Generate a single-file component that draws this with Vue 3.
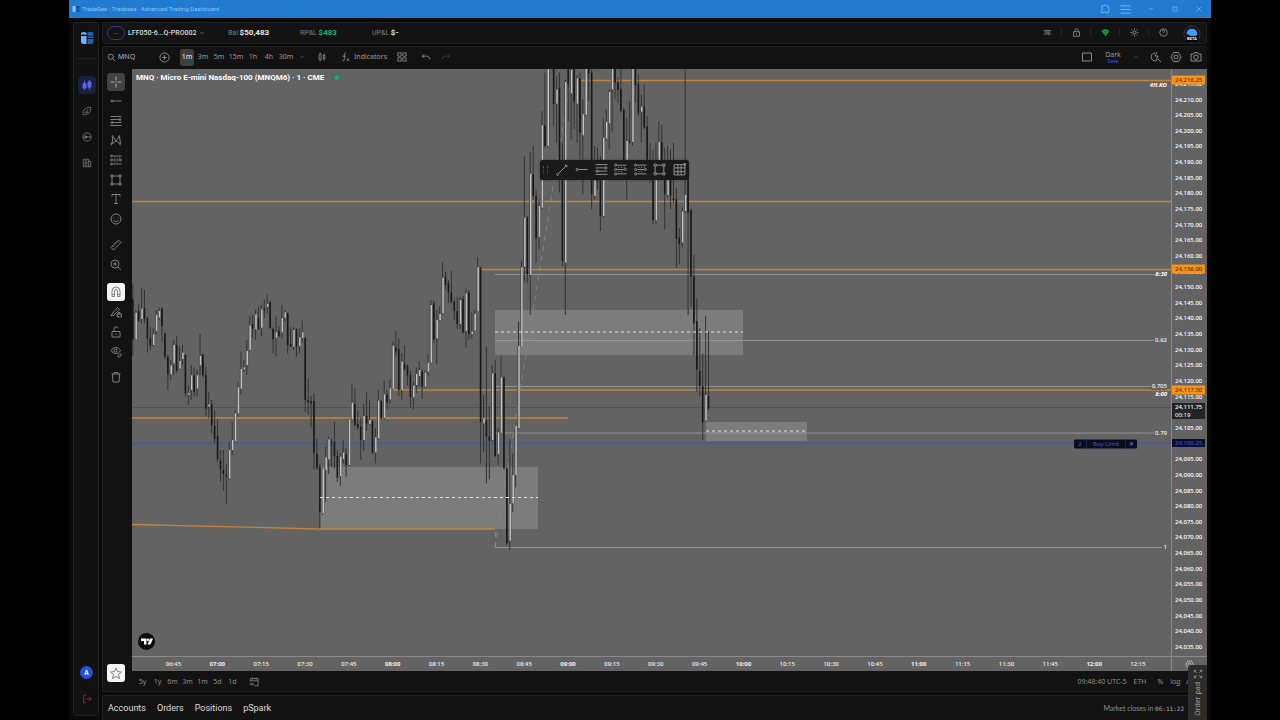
<script setup>
import { h } from 'vue'

const paths = {
  search: 'M10 3a7 7 0 1 0 0 14a7 7 0 1 0 0-14M15 15l7 7',
  plus: 'M12 2a10 10 0 1 0 0 20a10 10 0 1 0 0-20M12 7v10M7 12h10',
  chevron: 'M6 9l6 6 6-6',
  bars: 'M5 6h5v12H5zM7.5 1v5M7.5 18v5M15 8h4v8h-4zM17 3v5M17 16v5',
  fx: 'M13 3c-4-2-5 1-5 5v9c0 4-2 5-5 4M3 10h9M13 15l7 7M20 15l-7 7',
  grid: 'M2 2h8v8H2zM14 2h8v8h-8zM2 14h8v8H2zM14 14h8v8h-8z',
  undo: 'M8 5L3 10l5 5M3 10h11c5 0 7 3 7 8',
  redo: 'M16 5l5 5-5 5M21 10H10c-5 0-7 3-7 8',
  square: 'M3 4h18v16H3z',
  quick: 'M10 4a7 8 0 1 0 5 13M16 16l6 6M14 2l-4 8h6l-3 7',
  hex: 'M7 3h10l5 9-5 9H7L2 12zM12 8a4 4 0 1 0 0 8a4 4 0 1 0 0-8',
  camera: 'M2 6h5l2-3h6l2 3h5v14H2zM12 8a4.500 4.500 0 1 0 0 9a4.500 4.500 0 1 0 0-9',
  cross: 'M12 1v8M12 15v8M1 12h8M15 12h8M11 12h2',
  ray: 'M4 10a2 2 0 1 0 0 4a2 2 0 1 0 0-4M6 12h17',
  fib: 'M1 3h22M1 9h18M5 15h18M1 21h22M20 7a2 2 0 1 0 0 4a2 2 0 1 0 0-4M4 13a2 2 0 1 0 0 4a2 2 0 1 0 0-4',
  pattern: 'M4 20L6 5l6 9 7-9 2 15-9-6-8 6M6 3a2 2 0 1 0 0 4M19 3a2 2 0 1 0 0 4M4 18a2 2 0 1 0 0 4M21 18a2 2 0 1 0 0 4',
  position: 'M6 4h17M6 12h13M6 20h17M3 2a2 2 0 1 0 0 4a2 2 0 1 0 0-4M3 10a2 2 0 1 0 0 4a2 2 0 1 0 0-4M3 18a2 2 0 1 0 0 4a2 2 0 1 0 0-4M21 10a2 2 0 1 0 0 4a2 2 0 1 0 0-4M8 8h2M13 8h2M18 8h2M8 16h2M13 16h2',
  rect: 'M6 4h12M6 20h12M4 6v12M20 6v12M2 2h4v4H2zM18 2h4v4h-4zM2 18h4v4H2zM18 18h4v4h-4z',
  letter: 'M4 7V3h16v4M12 3v18M8 21h8',
  smile: 'M12 2a10 10 0 1 0 0 20a10 10 0 1 0 0-20M8 9v2M16 9v2M7 14c2 4 8 4 10 0',
  ruler: 'M17 2l5 5L7 22l-5-5zM14 5l2 2M11 8l2 2M8 11l2 2M5 14l2 2',
  zoomin: 'M10 2a8 8 0 1 0 0 16a8 8 0 1 0 0-16M16 16l6 6M10 6v8M6 10h8',
  magnet: 'M4 21V10a8 8 0 0 1 16 0v11h-5V10a3 3 0 0 0-6 0v11zM4 17h5M15 17h5',
  penlock: 'M3 17L15 3l4 4L7 19l-5 1zM14 16h9v6h-9zM16 16v-3h4v3',
  unlock: 'M4 11h16v11H4zM8 11V6a4 4 0 0 1 8-1M12 15v3',
  eye: 'M2 9c5-8 14-8 19 0c-5 8-14 8-19 0M11 6a3 3 0 1 0 0 6a3 3 0 1 0 0-6M15 20l5-5 3 3-5 5z',
  trash: 'M3 6h18M8 6V3h8v3M5 6l1 16h12l1-16',
  star: 'M12 2l3 7 8 1-6 5 2 8-7-4-7 4 2-8-6-5 8-1z',
  line: 'M4 20L20 4M3 19a2 2 0 1 0 2 2M19 3a2 2 0 1 0 2 2',
  mesh: 'M2 3h20v19H2zM2 9h20M2 16h20M9 3v19M15 3v19M20 1h3v3h-3z',
  calendar: 'M3 11V4h19v17h-9M3 9h19M8 1v5M17 1v5M1 17h9M7 13l4 4-4 4',
  leaf: 'M3 21C1 10 8 3 21 3c1 11-5 18-18 18M7 17l8-9M9 15h6',
  compass: 'M12 2a10 10 0 1 0 0 20a10 10 0 1 0 0-20M2 12h20M8 8v8M8 9l5 3-5 3',
  news: 'M3 3h13v18H3zM16 8h5v13h-5M6 7h7M6 11h7M6 14h7M6 17h7',
  logout: 'M10 3H4v18h6M9 12h13M17 7l5 5-5 5',
  sliders: 'M2 7h6M12 7h10M2 16h11M17 16h5M10 4v6M15 13v6M5 11h14',
  lock: 'M4 10h16v12H4zM8 10V6a4 4 0 0 1 8 0v4M12 14v4',
  sun: 'M12 8a4 4 0 1 0 0 8a4 4 0 1 0 0-8M12 1v4M12 19v4M1 12h4M19 12h4M4 4l3 3M17 17l3 3M20 4l-3 3M7 17l-3 3',
  help: 'M12 2a10 10 0 1 0 0 20a10 10 0 1 0 0-20M9 9c0-4 6-4 6 0c0 2-3 2-3 5M12 17v1',
  puzzle: 'M4 5h5c0-4 6-4 6 0h5v5c3 0 3 6 0 6v5h-6c0-3-4-3-4 0H4v-6c3 0 3-4 0-4z',
  menu: 'M1 4h22M1 12h22M1 20h22',
  minimize: 'M5 12h14',
  maximize: 'M6 6h12v12H6z',
  close: 'M5 5l14 14M19 5L5 19',
  expand: 'M3 8V3h5M16 3h5v5M21 16v5h-5M8 21H3v-5M9 9L4 4M15 9l5-5M15 15l5 5M9 15l-5 5'
}
const Icon = (p) =>
  h('svg', { viewBox: '0 0 24 24', fill: 'none', stroke: 'currentColor', 'stroke-width': 1.8, 'aria-hidden': 'true' }, [
    h('path', { d: paths[p.name] })
  ])
Icon.props = ['name']

const intervals = ['1m', '3m', '5m', '15m', '1h', '4h', '30m']
const drawTools = ['ray', 'fib', 'pattern', 'position', 'rect', 'letter', 'smile']
const measureTools = ['ruler', 'zoomin']
const modeTools = ['magnet', 'penlock', 'unlock', 'eye']
const floatTools = ['line', 'ray', 'fib', 'position', 'position', 'rect', 'mesh']
const ranges = ['5y', '1y', '6m', '3m', '1m', '5d', '1d']
const statusTools = ['sliders', 'lock', 'wifi', 'sun', 'help']

/* Bars as [direction, high, low, body top, body bottom], in thirds of a unit below each block's origin */
const blocks = [
  { origin: 250, bars: [
    [0,100,318,148,268],[1,180,270,188,268],[0,160,215,183,212],[1,112,220,176,207],[0,120,220,175,207],[0,200,308,205,265],
    [0,230,300,265,288],[1,235,290,253,285],[1,180,255,195,243],[1,172,210,183,203],[0,172,275,175,230],[0,248,326,250,320],
    [0,315,420,320,373],[1,330,390,346,373],[1,270,375,285,340],[0,258,368,285,362],[1,290,360,333,356],[1,285,345,308,327],
    [0,312,440,315,430],[1,405,465,429,434],[1,345,450,376,420],[0,352,440,376,425],[1,360,440,376,415],[1,252,376,318,346],
    [0,310,382,315,376],[0,350,500,376,476],[1,425,505,463,470],[0,450,550,463,525],[0,480,580,527,567],[0,507,635,558,628],
    [0,600,695,632,658],[0,600,722,660,672],[0,640,762,674,680],[1,575,690,600,686],[1,515,615,570,600],[1,480,575,490,573],
    [1,395,500,412,490],[1,305,435,357,416],[1,330,365,352,358],[1,270,375,303,345],[1,200,303,227,300],[0,195,265,222,236],
    [1,180,270,193,237],[0,170,240,205,237],[1,165,258,178,233],[0,150,205,177,181],[1,132,190,162,171],[0,152,238,157,233],
    [0,232,310,237,268],[1,200,320,247,263],[0,228,262,243,258],[1,165,265,205,247],[1,180,215,187,203],[0,187,312,190,285],
    [0,232,290,282,290],[1,232,300,240,290],[0,235,320,237,290],[1,235,310,262,288],[1,212,278,247,264],[0,260,487,264,450],
    [0,385,495,450,456],[0,437,532,453,460],[0,430,658,453,608],[0,565,660,612,653],[0,640,835,650,785],[1,655,795,657,790],
    [1,590,755,622,660],[1,560,672,568,628],[0,565,650,575,577],[0,515,655,575,618],[0,600,695,618,683],[1,610,708,620,678],
    [1,570,640,608,627],[0,595,680,612,645],[1,505,648,508,645],[1,402,512,458,508],[0,415,530,462,525],[0,482,540,522,532],
    [0,500,630,530,570],[1,462,602,498,570],[0,425,542,498,520],[1,450,525,510,522],[0,510,612,515,608],[1,535,640,562,607],
    [1,420,570,452,565],[0,450,508,453,505],[1,392,508,433,503],[0,420,478,433,457],[1,388,462,415,448],[1,275,418,287,417],
    [0,242,320,293,305],[0,265,437,297,420],[1,310,448,335,420],[0,287,362,343,357],[0,343,407,347,377],[0,362,472,375,440],
    [1,395,478,407,442],[1,352,430,372,405],[1,335,408,360,378],[0,358,447,365,410],[1,362,413,368,410],[1,312,378,338,365],
    [1,150,340,165,338],[0,153,278,160,268],[1,180,342,210,265],[1,170,212,192,210],[1,35,195,83,190],[0,65,118,80,105],
    [0,90,158,100,127],[0,62,160,128,157],[0,148,210,155,182],[0,140,237,183,222],[1,142,237,150,222],[0,138,250,147,248],
    [1,115,293,130,243],[0,120,270,128,252],[1,188,265,245,252],[1,180,245,192,242],[1,22,187,52,184],[0,50,640,55,518],
    [1,435,605,505,520],[0,290,700,512,560],[0,470,688,560,572],[1,345,575,370,570],[0,330,622,370,618],[1,535,645,547,612],
    [1,318,552,382,548],[0,378,658,382,655],[0,652,885,655,880],[1,567,900,762,872],[1,610,785,675,760],[1,520,712,527,675],
    [1,215,540,288,535],[1,32,290,52,290]] },
  { origin: 66, bars: [
    [1,270,650,455,602],[0,450,650,455,625],[1,258,747,323,627],[0,240,400,325,390],[0,370,590,390,517],[1,400,550,420,513],
    [1,135,430,178,425],[0,20,245,178,240],[1,0,245,0,240],[0,0,5,0,5],[0,0,180,0,115],[1,30,230,70,113],[0,20,380,65,285],
    [0,230,600,330,585],[1,40,747,48,590],[0,0,165,10,55],[1,0,220,12,82],[0,0,190,10,107],[1,28,230,37,113],
    [0,20,280,37,200],[1,100,385,145,208],[1,0,150,5,147],[0,0,105,0,22],[0,10,430,20,385],[1,240,400,340,390],
    [0,245,370,340,345],[0,270,495,280,450],[1,155,455,215,450],[1,130,225,168,218],[1,70,250,78,172],[1,0,200,0,70],
    [0,0,100,0,50],[0,35,110,50,72],[0,10,140,68,135],[0,125,300,132,290],[1,155,400,225,290],[0,105,235,225,228],
    [1,0,240,0,228],[0,0,110,0,57],[0,25,150,55,140],[1,85,230,122,137],[0,55,190,122,185],[0,150,300,182,290],
    [0,230,350,285,340],[0,250,475,300,462],[1,230,475,300,463],[1,165,295,228,290],[0,175,320,228,290],[0,245,490,285,385],
    [1,240,395,340,387],[0,250,430,340,390],[0,230,410,398,402],[0,365,605,400,518],[0,485,595,515,535],[1,425,545,437,530],
    [1,0,440,387,435],[0,330,747,340,440]] },
  { origin: 180, bars: [
    [0,85,380,90,290],[0,225,525,290,430],[0,355,635,423,568],[0,445,648,573,618],[0,520,780,618,727],[1,408,725,645,722],
    [0,455,690,648,685]] }
]
const candles = blocks
  .flatMap((b) => b.bars.map(([up, ...ys]) => ({ up, ys: ys.map((y) => b.origin + y / 3) })))
  .map((c, i) => ({
    up: c.up, x: 132.3 + i * 2.9225,
    hi: c.ys[0], lo: c.ys[1], top: c.ys[2], height: Math.max(1, c.ys[3] - c.ys[2])
  }))

const pct = (y) => ((y - 69) / 587) * 100 + '%'
const fmt = (n) => n.toLocaleString('en-US', { minimumFractionDigits: 2 })
const lastPriceRow = 24110
const prices = Array.from({ length: 37 }, (_, i) => 24215 - i * 5)
  .filter((p) => p !== lastPriceRow)
  .map((p) => ({ text: fmt(p), top: pct(99.5 + (24210 - p) * 3.128) }))
const tags = [
  { text: '24,216.25', top: pct(80), kind: 'orange' },
  { text: '24,156.00', top: pct(269), kind: 'orange' },
  { text: '24,117.50', top: pct(390), kind: 'orange' },
  { text: '24,111.75', sub: '00:19', top: pct(411), kind: 'dark' },
  { text: '24,100.25', top: pct(443), kind: 'blue' }
]
const levels = [
  { text: '4H.KO', top: pct(85), key: true },
  { text: '8:30', top: pct(274), key: true },
  { text: '0.62', top: pct(340) },
  { text: '0.705', top: pct(386) },
  { text: '8:00', top: pct(394), key: true },
  { text: '0.79', top: pct(433) },
  { text: '1', top: pct(547) }
]
const times = Array.from({ length: 23 }, (_, i) => {
  const m = 405 + i * 15
  const two = (n) => String(n).padStart(2, '0')
  return { text: two(Math.floor(m / 60)) + ':' + two(m % 60), hour: m % 60 === 0, left: ((41.5 + i * 43.84) / 1039) * 100 + '%' }
})
</script>

<template>
  <div class="window">
    <header class="titlebar">
      <svg class="app-mark" viewBox="0 0 16 16"><path d="M1 2h6v12H3L1 12z" fill="#8cc2ff" /><path d="M9 2h6v5H9zM9 9h6v5H9z" fill="#0b4fae" /></svg>
      <span class="title">TradeSea - Tradesea - Advanced Trading Dashboard</span>
      <button class="win wide" aria-label="Extensions"><Icon name="puzzle" /></button>
      <button class="win big" aria-label="Menu"><Icon name="menu" /></button>
      <button v-for="n in ['minimize', 'maximize', 'close']" :key="n" class="win" :aria-label="n"><Icon :name="n" /></button>
    </header>

    <div class="shell">
      <nav class="rail">
        <svg class="logo" viewBox="0 0 28 28">
          <path d="M2 4q6-4 11 0v4H2zM2 10h11v16H7q-5 0-5-5z" fill="#78aefa" />
          <path d="M15 2h9q3 0 3 3v9H15zM15 16h12v5q0 5-5 5h-7z" fill="#1b64b8" />
          <path d="M0 9q7-4 13 0t15 0" fill="none" stroke="#131313" stroke-width="1.500" />
        </svg>
        <hr />
        <button class="nav active" aria-label="Chart">
          <svg viewBox="0 0 24 24" fill="#5865f2" stroke="#5865f2" stroke-width="2"><path d="M4 9h6v9H4zM14 6h6v10h-6zM7 4v18M17 2v19" /></svg>
        </button>
        <button v-for="n in ['leaf', 'compass', 'news']" :key="n" class="nav" :aria-label="n"><Icon :name="n" /></button>
        <span class="spacer"></span>
        <button class="avatar" aria-label="Account">A</button>
        <button class="nav exit" aria-label="Log out"><Icon name="logout" /></button>
      </nav>

      <main class="main">
        <section class="topbar">
          <button class="account"><span class="ring">·–·</span><span>LFF050-6...Q-PRO002</span><Icon name="chevron" /></button>
          <div class="stats">
            <span>Bal <b>$50,483</b></span>
            <span>RP&amp;L <b class="gain">$483</b></span>
            <span>UP&amp;L <b>$-</b></span>
          </div>
          <div class="status">
            <button v-for="n in statusTools" :key="n" :aria-label="n" :class="n">
              <svg v-if="n === 'wifi'" viewBox="0 0 24 24" fill="#17a34a"><path d="M1 8q11-9 22 0L12 21z" /><path d="M4 11q8-6 16 0M8 15q4-3 8 0" fill="none" stroke="#131313" /></svg>
              <Icon v-else :name="n" />
            </button>
            <span class="profile">
              <svg viewBox="0 0 20 20"><circle cx="10" cy="10" r="9" fill="#17131f" stroke="#42305a" /><path d="M4 9c1-7 12-6 12 1l-2 3H8l-1-2-3-1z" fill="#3f9af0" /></svg>
              <b>BETA</b>
            </span>
          </div>
        </section>

        <section class="panel">
          <div class="toolbar">
            <button class="symbol"><Icon name="search" />MNQ</button>
            <button class="add" aria-label="Compare"><Icon name="plus" /></button>
            <button v-for="t in intervals" :key="t" class="interval" :class="{ on: t === '1m', long: t.length > 2 }">{{ t }}</button>
            <button class="t16" aria-label="More intervals"><Icon name="chevron" class="tiny" /></button>
            <button class="t26" aria-label="Bar style"><Icon name="bars" /></button>
            <button class="indicators"><Icon name="fx" />Indicators</button>
            <button class="t20" aria-label="Layouts"><Icon name="grid" /></button>
            <span class="gap"></span>
            <button class="t20" aria-label="Undo"><Icon name="undo" /></button>
            <button class="t20 dim" aria-label="Redo"><Icon name="redo" /></button>
            <span class="spacer"></span>
            <button class="t26" aria-label="Layout"><Icon name="square" class="large" /></button>
            <button class="theme"><span>Dark</span><small>Save</small></button>
            <button class="t20" aria-label="Layout menu"><Icon name="chevron" class="tiny" /></button>
            <button class="t20" aria-label="Quick search"><Icon name="quick" class="large" /></button>
            <button class="t20" aria-label="Settings"><Icon name="hex" class="large" /></button>
            <button class="t20" aria-label="Snapshot"><Icon name="camera" class="large" /></button>
          </div>

          <div class="body">
            <aside class="tools">
              <button class="cursor" aria-label="Cursor"><Icon name="cross" /></button>
              <div class="group draw"><button v-for="n in drawTools" :key="n" :aria-label="n"><Icon :name="n" /></button></div>
              <div class="group"><button v-for="n in measureTools" :key="n" :aria-label="n"><Icon :name="n" /></button></div>
              <div class="group"><button v-for="n in modeTools" :key="n" :aria-label="n" :class="{ lit: n === 'magnet' }"><Icon :name="n" /></button></div>
              <div class="group"><button aria-label="Delete"><Icon name="trash" /></button></div>
              <span class="spacer"></span>
              <button class="lit fav" aria-label="Favorites"><Icon name="star" /></button>
            </aside>

            <div class="chart">
              <div class="plot-row">
                <div class="plot">
                  <svg class="canvas" viewBox="132 69 1039 587" preserveAspectRatio="none">
                    <g class="zone">
                      <rect x="495" y="310" width="248" height="45" />
                      <rect x="320" y="467" width="218" height="62" />
                      <rect x="706" y="422" width="101" height="19" />
                    </g>
                    <path class="faint" d="M132 407.500H1171" />
                    <path class="fibs" d="M495 274.500H1155M495 340.500H1154M495 386.500H1151M495 433H1154M495 547.500H1162" />
                    <path class="trend" d="M495 547L572 69M495.500 547V529" />
                    <path class="level" d="M580 80.500H1171M132 201.500H1171M480 269.500H1171M393 390H1171M132 418H568M132 524.500L320 529H495" />
                    <path class="order" d="M132 443.500H1171" />
                    <g v-for="c in candles" :key="c.x" :class="c.up ? 'up' : 'down'">
                      <rect class="wick" :x="c.x" :y="c.hi" width="1" :height="c.lo - c.hi" />
                      <rect v-if="c.up" class="edge" :x="c.x - 0.6" :y="c.top" width="2.600" :height="c.height" />
                      <rect class="fill" :x="c.up ? c.x + 0.2 : c.x - 0.3" :y="c.top" :width="c.up ? 1.5 : 1.6" :height="c.height" />
                    </g>
                    <path class="mid" d="M495 332H743M320 497.500H538M706 431H807" />
                  </svg>
                  <h1 class="legend">MNQ · Micro E-mini Nasdaq-100 (MNQM6) · 1 · CME<i></i></h1>
                  <span v-for="l in levels" :key="l.text" class="lvl" :class="{ key: l.key }" :style="{ top: l.top }">{{ l.text }}</span>
                  <div class="ticket"><span>2</span><span>Buy Limit</span><button aria-label="Cancel order">✕</button></div>
                  <div class="floating">
                    <i class="grip"></i>
                    <button v-for="(n, i) in floatTools" :key="i" :aria-label="n"><Icon :name="n" /></button>
                  </div>
                  <svg class="tv" viewBox="0 0 34 34"><circle cx="17" cy="17" r="17" fill="#0c0c0c" /><path d="M6 11h11v12h-5v-7H6z" fill="#fff" /><circle cx="20" cy="13.500" r="2.400" fill="#fff" /><path d="M24 11h6l-5 12h-6z" fill="#fff" /></svg>
                </div>
                <div class="prices">
                  <span v-for="p in prices" :key="p.text" class="price" :style="{ top: p.top }">{{ p.text }}</span>
                  <span v-for="t in tags" :key="t.text" class="price tag" :class="t.kind" :style="{ top: t.top }">{{ t.text }}<em v-if="t.sub">{{ t.sub }}</em></span>
                </div>
              </div>
              <div class="time-row">
                <div class="times"><span v-for="t in times" :key="t.text" :class="{ hour: t.hour }" :style="{ left: t.left }">{{ t.text }}</span></div>
                <button class="axis-set" aria-label="Axis settings"><Icon name="hex" /></button>
              </div>
              <div class="range-row">
                <button v-for="r in ranges" :key="r">{{ r }}</button>
                <button class="goto" aria-label="Go to date"><Icon name="calendar" /></button>
                <span class="spacer"></span>
                <button class="clock">09:48:40 UTC-5</button>
                <button class="eth">ETH</button>
                <button class="scale">%</button>
                <button class="scale">log</button>
                <button class="auto">auto</button>
              </div>
            </div>
          </div>
        </section>

        <footer class="bottom">
          <button v-for="t in ['Accounts', 'Orders', 'Positions', 'pSpark']" :key="t">{{ t }}</button>
          <span class="spacer"></span>
          <span class="closes">Market closes in <code>06:11:22</code></span>
        </footer>
        <button class="orderpad"><Icon name="expand" /><span>Order pad</span></button>
      </main>
    </div>
  </div>
</template>

<style>
body { background: #000; overflow: hidden; }
</style>

<style scoped>
* { box-sizing: border-box; }
button { appearance: none; border: 0; padding: 0; margin: 0; background: none; color: inherit; font: inherit; line-height: inherit; display: flex; align-items: center; justify-content: center; flex: none; white-space: nowrap; }
svg { display: block; flex: none; width: 10px; height: 10px; }
.spacer { flex: 1; }
.window { height: 100vh; margin: 0 69px; background: #0a0a0a; color: #a6a6a6; font-family: "Noto Sans", sans-serif; font-size: 7px; line-height: 10px; display: flex; flex-direction: column; }
.titlebar { height: 18px; flex: none; background: #217bd1; color: #8cc4f8; display: flex; align-items: center; padding: 0 0 0 3px; font-size: 6px; }
.app-mark { width: 8px; height: 8px; margin-right: 2px; }
.title { flex: 1; font-family: Roboto, sans-serif; }
.win { width: 24px; height: 18px; }
.win svg { width: 8px; height: 8px; }
.win.wide, .win.big { width: 21px; }
.win.big { margin-right: 3px; }
.win.wide svg { width: 10px; height: 10px; }
.win.big svg { width: 11px; height: 11px; }

.shell { flex: 1; min-height: 0; display: flex; gap: 3px; padding: 4px 4px 0; }
.rail { width: 26px; flex: none; margin-bottom: 4px; border: 1px solid #222; border-radius: 3px; background: #111; display: flex; flex-direction: column; align-items: center; padding: 8px 0 7px 1px; }
.logo { width: 14px; height: 14px; }
.rail hr { width: 20px; border: 0; border-top: 1px solid #222; margin: 13px 0 17px; }
.nav { width: 18px; height: 18px; margin-bottom: 8px; color: #858585; }
.nav.active { background: #1b1f42; border-radius: 4px; }
.nav.active svg { width: 12px; height: 12px; }
.avatar { width: 13px; height: 13px; border-radius: 50%; background: #2453d8; color: #fff; font: 700 6px/13px Inter, sans-serif; }
.nav.exit { margin: 11px 0 0; color: #b52646; }

.main { flex: 1; min-width: 0; display: flex; flex-direction: column; position: relative; }
.topbar { height: 22px; flex: none; border: 1px solid #1f1f1f; border-radius: 3px; background: #131313; display: flex; align-items: center; padding-bottom: 1px; font-family: Roboto, sans-serif; font-size: 7px; }
.account { color: #dcdcdc; font-weight: 500; gap: 3px; margin-left: 4px; width: 98px; justify-content: flex-start; }
.account svg { width: 6px; height: 6px; }
.ring { flex: none; width: 18px; height: 14px; border: 1px solid #3b3a80; border-radius: 7px; color: #777; line-height: 12px; font-size: 5px; }
.stats { display: flex; margin-left: 23px; color: #7e7e7e; }
.stats span { width: 72px; white-space: nowrap; }
.stats b { color: #e8e8e8; font-weight: 700; font-size: 8px; }
.stats b.gain { color: #20ad73; }
.status { margin-left: auto; display: flex; align-items: center; color: #b0b0b0; }
.status button { width: 29px; height: 9px; border-right: 1px solid #242424; }
.status button.help { border: 0; }
.status svg { width: 9px; height: 9px; }
.profile { width: 28px; display: flex; flex-direction: column; align-items: center; }
.status .profile svg { width: 18px; height: 18px; margin-top: 2px; }
.profile b { margin-top: -7px; background: #000; color: #fff; font-size: 4px; line-height: 6px; padding: 0 1px; border-radius: 2px; }

.panel { flex: 1; min-height: 0; margin-top: 2px; border: 1px solid #1f1f1f; border-right: 0; border-radius: 3px 3px 0 0; background: #121212; display: flex; flex-direction: column; }
.toolbar { height: 22px; flex: none; display: flex; align-items: center; padding: 0 1px 2px 0; color: #9b9b9b; }
.symbol { width: 47px; justify-content: flex-start; gap: 2px; padding-left: 4px; color: #b5b5b5; }
.symbol svg { width: 9px; height: 9px; }
.add { width: 28px; margin-right: 2px; }
.add svg { width: 11px; height: 11px; }
.interval { width: 16px; height: 17px; }
.interval.long { width: 18px; }
.interval.on { width: 14px; margin-right: 1px; background: #3e3e3e; color: #eee; border-radius: 3px; }
.tiny { width: 6px; height: 6px; }
.large { width: 12px; height: 12px; }
.t16 { width: 14px; }
.t20 { width: 20px; }
.t26 { width: 26px; }
.gap { width: 4px; }
.dim { color: #454545; }
.indicators { width: 57px; gap: 3px; padding-left: 1px; }
.theme { width: 26px; flex-direction: column; line-height: 8px; }
.theme small { color: #4055f5; font-size: 5px; line-height: 5px; }

.body { flex: 1; min-height: 0; display: flex; }
.tools { width: 29px; flex: none; display: flex; flex-direction: column; align-items: center; padding: 4px 3px 0 0; color: #8b8b8b; }
.tools button { width: 18px; height: 18px; border-radius: 3px; }
.tools svg { width: 12px; height: 12px; }
.tools .cursor { background: #424242; color: #bcbcbc; }
.group { display: flex; flex-direction: column; gap: 2px; margin-top: 6px; }
.group.draw { justify-content: space-between; gap: 0; height: 136px; margin-top: 1px; }
.group:nth-of-type(2) { margin-top: 8px; }
.group:nth-of-type(3) { margin-top: 9px; }
.group:nth-of-type(4) { margin-top: 7px; }
.tools .lit { background: #f4f4f4; color: #777; }
.tools .fav { margin-bottom: 9px; }

.chart { flex: 1; min-width: 0; display: flex; flex-direction: column; color: #f2f2f2; }
.plot-row { flex: 1; min-height: 0; display: flex; background: #636363; }
.plot { flex: 1; position: relative; overflow: hidden; }
.canvas { position: absolute; inset: 0; width: 100%; height: 100%; }
.canvas path { fill: none; }
.zone { fill: #7c7c7c; }
.faint { stroke: #525252; }
.fibs { stroke: #959595; }
.trend { stroke: #858585; stroke-dasharray: 5 5; }
.level { stroke: #c5853f; stroke-width: 1.3; }
.order { stroke: #4a50c4; stroke-width: 1.5; }
.mid { stroke: #e4e4e4; stroke-dasharray: 3 3; }
.wick { fill: #333; }
.edge { fill: #454545; }
.up .fill { fill: #c2c2c2; }
.down .fill { fill: #181818; }
.legend { position: absolute; left: 4px; top: 3px; margin: 0; font-family: Roboto, sans-serif; font-size: 8px; line-height: 11px; font-weight: 700; color: #fff; display: flex; align-items: center; white-space: nowrap; }
.legend i { width: 5px; height: 5px; border-radius: 50%; background: #289d72; margin-left: 10px; box-shadow: 0 0 0 2px #4b6a5e; }
.lvl { position: absolute; right: 4px; transform: translateY(-50%); font-size: 6px; line-height: 8px; font-weight: 500; background: #636363; padding-left: 1px; }
.lvl.key { font-weight: 700; font-style: italic; color: #fff; background: none; }
.ticket { position: absolute; right: 34px; top: 63.8%; transform: translateY(-50%); display: flex; background: #0b0d1c; color: #4055e0; line-height: 9px; font-size: 6px; text-align: center; border-radius: 1px; }
.ticket span:first-child { width: 12px; }
.ticket span + span { width: 40px; border: solid #1c2250; border-width: 0 1px; }
.ticket button { width: 11px; color: #6f82ff; }
.floating { position: absolute; left: 39.300%; top: 15.500%; height: 20px; width: 149px; padding: 0 0 0 3px; border-radius: 3px; background: #1a1a1a; color: #929292; display: flex; align-items: center; box-shadow: 0 0 2px #333; }
.grip { width: 5px; height: 8px; margin-right: 4px; border: dotted #555; border-width: 0 1px; }
.floating button { width: 19px; height: 20px; flex: 1; }
.floating svg { width: 13px; height: 13px; }
.tv { position: absolute; left: 6px; bottom: 6px; width: 17px; height: 17px; }
.prices { width: 36px; flex: none; position: relative; overflow: hidden; border-left: 1px solid #8b8b8b; }
.price { position: absolute; left: 0; width: 33px; padding-left: 3px; transform: translateY(-50%); font-size: 6px; line-height: 9px; font-weight: 500; color: #fff; }
.tag.orange { background: #f7931a; color: #5d3503; }
.tag.dark { background: #242424; line-height: 8px; }
.tag em { display: block; font-style: normal; font-weight: 400; }
.tag.blue { background: #0a0e2c; color: #3d4fd8; line-height: 8px; }
.time-row { height: 15px; flex: none; display: flex; background: #636363; border-top: 1px solid #8b8b8b; }
.times { flex: 1; position: relative; font-size: 6px; font-weight: 500; }
.times span { position: absolute; top: 2px; transform: translateX(-50%); }
.times .hour { font-weight: 700; }
.axis-set { width: 36px; border-left: 1px solid #8b8b8b; color: #dedede; }
.axis-set svg { width: 9px; height: 9px; }
.range-row { height: 20px; flex: none; display: flex; align-items: center; color: #8f8f8f; padding: 1px 0 0 3px; overflow: hidden; }
.range-row button { width: 15px; }
.range-row .goto { width: 28px; }
.range-row .clock { width: 56px; }
.range-row .eth { width: 20px; margin-right: 3px; }
.range-row .auto { width: 24px; justify-content: flex-start; padding-left: 3px; }

.bottom { height: 25px; flex: none; margin-top: 3px; border: 1px solid #222; border-bottom: 0; border-radius: 3px 3px 0 0; background: #121212; display: flex; align-items: center; gap: 11px; padding: 0 22px 0 5px; font-family: Roboto, sans-serif; font-size: 9px; color: #dedede; }
.closes { font-family: Lato, sans-serif; font-size: 7px; color: #8d8d8d; white-space: nowrap; }
.closes code { font: 6px/8px "DejaVu Sans Mono", monospace; color: #b0b0b0; }
.orderpad { position: absolute; right: 0; bottom: 0; width: 19px; height: 55px; background: #2c2c2c; color: #a2a2a2; border-radius: 3px 0 0 0; flex-direction: column; gap: 3px; }
.orderpad span { writing-mode: vertical-rl; rotate: 180deg; font-size: 7px; }
</style>
